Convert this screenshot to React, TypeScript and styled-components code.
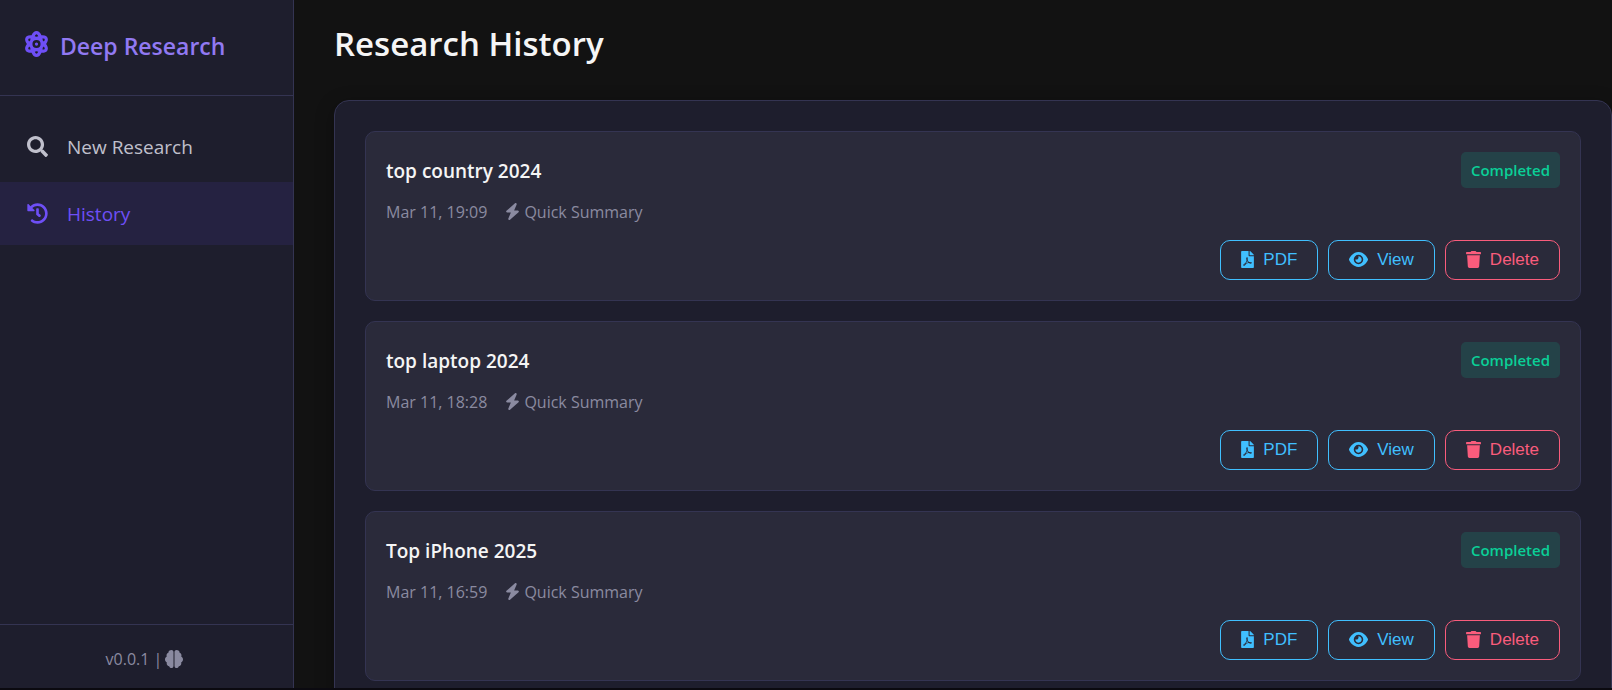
import React from "react";
import styled, { createGlobalStyle, css } from "styled-components";
import { FaBolt, FaEye } from "react-icons/fa6";
import { FaAtom, FaFilePdf, FaHistory, FaSearch, FaTrash } from "react-icons/fa";

const colors = {
  page: "#121212",
  panel: "#1e1e2d",
  card: "#2a2a3a",
  border: "#343452",
  accent: "#6e4ff6",
  accentSoft: "#9179f2",
  info: "#40bfff",
  danger: "#fa5c7c",
  success: "#0acf97",
  text: "#f5f5f5",
  textSoft: "#c0c0cc",
  muted: "#8a8aa0",
};

const GlobalStyle = createGlobalStyle`
  *, *::before, *::after { box-sizing: border-box; }
  body {
    margin: 0;
    background: ${colors.page};
    color: ${colors.text};
    font-family: "Segoe UI", "Open Sans", "Noto Sans", sans-serif;
    font-size: 16px;
    line-height: 24px;
  }
  h1, h2, h3, p, ul { margin: 0; padding: 0; }
`;

const Shell = styled.div`
  display: flex;
  height: 100vh;
  border-bottom: 2px solid #0b0a10;
`;

const Sidebar = styled.aside`
  display: flex;
  flex-direction: column;
  flex: 0 0 294px;
  background: ${colors.panel};
  border-right: 1px solid ${colors.border};
`;

const Brand = styled.header`
  display: flex;
  align-items: center;
  gap: 12px;
  height: 96px;
  padding: 0 25px 4px;
  border-bottom: 1px solid ${colors.border};
  color: ${colors.accent};

  svg { width: 23px; height: 26px; margin-bottom: 4px; }
`;

const BrandName = styled.h2`
  color: ${colors.accentSoft};
  font-size: 23px;
  font-weight: 600;
  line-height: 32px;
`;

const NavList = styled.ul`
  display: flex;
  flex-direction: column;
  gap: 4px;
  flex: 1;
  padding: 19px 0;
  list-style: none;
`;

const NavLink = styled.a<{ $active?: boolean }>`
  display: flex;
  align-items: center;
  gap: 19px;
  height: 63px;
  padding: 0 27px;
  color: ${(p) => (p.$active ? colors.accent : colors.textSoft)};
  background: ${(p) => (p.$active ? "rgba(110, 79, 246, 0.1)" : "transparent")};
  font-size: 19px;
  text-decoration: none;

  svg { width: 21px; height: 21px; }
`;

const SidebarFooter = styled.footer`
  display: flex;
  align-items: center;
  justify-content: center;
  gap: 3px;
  height: 64px;
  padding: 4px 4px 0 0;
  border-top: 1px solid ${colors.border};
  color: ${colors.muted};
  font-size: 16px;
`;

const Main = styled.main`
  flex: 1;
  min-width: 0;
  padding: 20px 0 40px 40px;
  overflow-y: auto;
  scrollbar-width: none;
`;

const PageTitle = styled.h1`
  margin-bottom: 32px;
  font-size: 33px;
  font-weight: 600;
  line-height: 48px;
`;

const Panel = styled.section`
  display: flex;
  flex-direction: column;
  gap: 20px;
  padding: 30px;
  background: ${colors.panel};
  border: 1px solid ${colors.border};
  border-radius: 15px;
  box-shadow: 0 5px 19px rgba(0, 0, 0, 0.3);
`;

const Card = styled.article`
  display: flex;
  flex-direction: column;
  padding: 20px;
  background: ${colors.card};
  border: 1px solid ${colors.border};
  border-radius: 10px;
`;

const CardHeader = styled.div`
  display: flex;
  align-items: flex-end;
  justify-content: space-between;
  margin-bottom: 12px;
`;

const CardTitle = styled.h3`
  font-size: 19px;
  font-weight: 600;
  line-height: 34px;
`;

const Status = styled.span`
  padding: 6px 10px;
  border-radius: 5px;
  background: rgba(10, 207, 151, 0.15);
  color: ${colors.success};
  font-size: 15px;
  font-weight: 600;
  line-height: 24px;
`;

const Meta = styled.div`
  display: flex;
  align-items: center;
  gap: 18px;
  margin-bottom: 16px;
  color: ${colors.muted};
  font-size: 16px;
`;

const Mode = styled.span`
  display: flex;
  align-items: center;
  gap: 4px;

  svg { width: 15px; height: 17px; margin-bottom: 2px; }
`;

const Actions = styled.div`
  display: flex;
  justify-content: flex-end;
  gap: 10px;
`;

const dangerTone = css`
  border-color: ${colors.danger};
  color: ${colors.danger};
`;

const ActionButton = styled.button<{ $iconWidth: number; $danger?: boolean }>`
  display: flex;
  align-items: center;
  gap: 9px;
  height: 40px;
  padding: 0 20px;
  border: 1px solid ${colors.info};
  border-radius: 10px;
  background: transparent;
  color: ${colors.info};
  font-family: Arial, "Liberation Sans", sans-serif;
  font-size: 17px;
  cursor: pointer;
  ${(p) => p.$danger && dangerTone}

  svg { width: ${(p) => p.$iconWidth}px; height: 17px; margin-bottom: 2px; }
`;

const history = [
  { title: "top country 2024", date: "Mar 11, 19:09" },
  { title: "top laptop 2024", date: "Mar 11, 18:28" },
  { title: "Top iPhone 2025", date: "Mar 11, 16:59" },
];

function BrainIcon() {
  return (
    <svg width="18" height="18" viewBox="0 0 18 18" fill="currentColor" aria-hidden>
      <path d="M6.4 0C7.6 0 8.5.9 8.5 2.1v13.8c0 1.2-.9 2.1-2.1 2.1-1.1 0-2-.7-2.2-1.8-1.500-.1-2.500-1.300-2.500-2.700 0-.4.1-.7.2-1C.8 12 0 10.800 0 9.500c0-1.300.7-2.400 1.800-3-.2-.4-.3-.8-.3-1.200 0-1.300.8-2.300 2-2.600-.1-.2-.1-.4-.1-.6C3.800.9 5 0 6.400 0z" />
      <path d="M11.6 0c-1.200 0-2.100.9-2.100 2.100v13.800c0 1.200.9 2.100 2.100 2.100 1.100 0 2-.7 2.200-1.800 1.500-.1 2.500-1.300 2.500-2.700 0-.4-.1-.7-.2-1 1.100-.5 1.900-1.700 1.900-3 0-1.300-.7-2.400-1.800-3 .2-.4.3-.8.3-1.200 0-1.300-.8-2.300-2-2.600.1-.2.1-.4.1-.6C14.200.9 13 0 11.600 0z" />
    </svg>
  );
}

function HistoryCard({ title, date }: { title: string; date: string }) {
  return (
    <Card>
      <CardHeader>
        <CardTitle>{title}</CardTitle>
        <Status>Completed</Status>
      </CardHeader>
      <Meta>
        <time>{date}</time>
        <Mode><FaBolt aria-hidden />Quick Summary</Mode>
      </Meta>
      <Actions>
        <ActionButton type="button" $iconWidth={13}><FaFilePdf aria-hidden />PDF</ActionButton>
        <ActionButton type="button" $iconWidth={19}><FaEye aria-hidden />View</ActionButton>
        <ActionButton type="button" $iconWidth={15} $danger><FaTrash aria-hidden />Delete</ActionButton>
      </Actions>
    </Card>
  );
}

export default function App() {
  return (
    <>
      <GlobalStyle />
      <Shell>
        <Sidebar>
          <Brand>
            <FaAtom aria-hidden />
            <BrandName>Deep Research</BrandName>
          </Brand>
          <NavList>
            <li><NavLink href="#new"><FaSearch aria-hidden />New Research</NavLink></li>
            <li><NavLink href="#history" $active aria-current="page"><FaHistory aria-hidden />History</NavLink></li>
          </NavList>
          <SidebarFooter>
            <span>v0.0.1 |</span>
            <BrainIcon />
          </SidebarFooter>
        </Sidebar>
        <Main>
          <PageTitle>Research History</PageTitle>
          <Panel>
            {history.map((item) => <HistoryCard key={item.title} {...item} />)}
          </Panel>
        </Main>
      </Shell>
    </>
  );
}
